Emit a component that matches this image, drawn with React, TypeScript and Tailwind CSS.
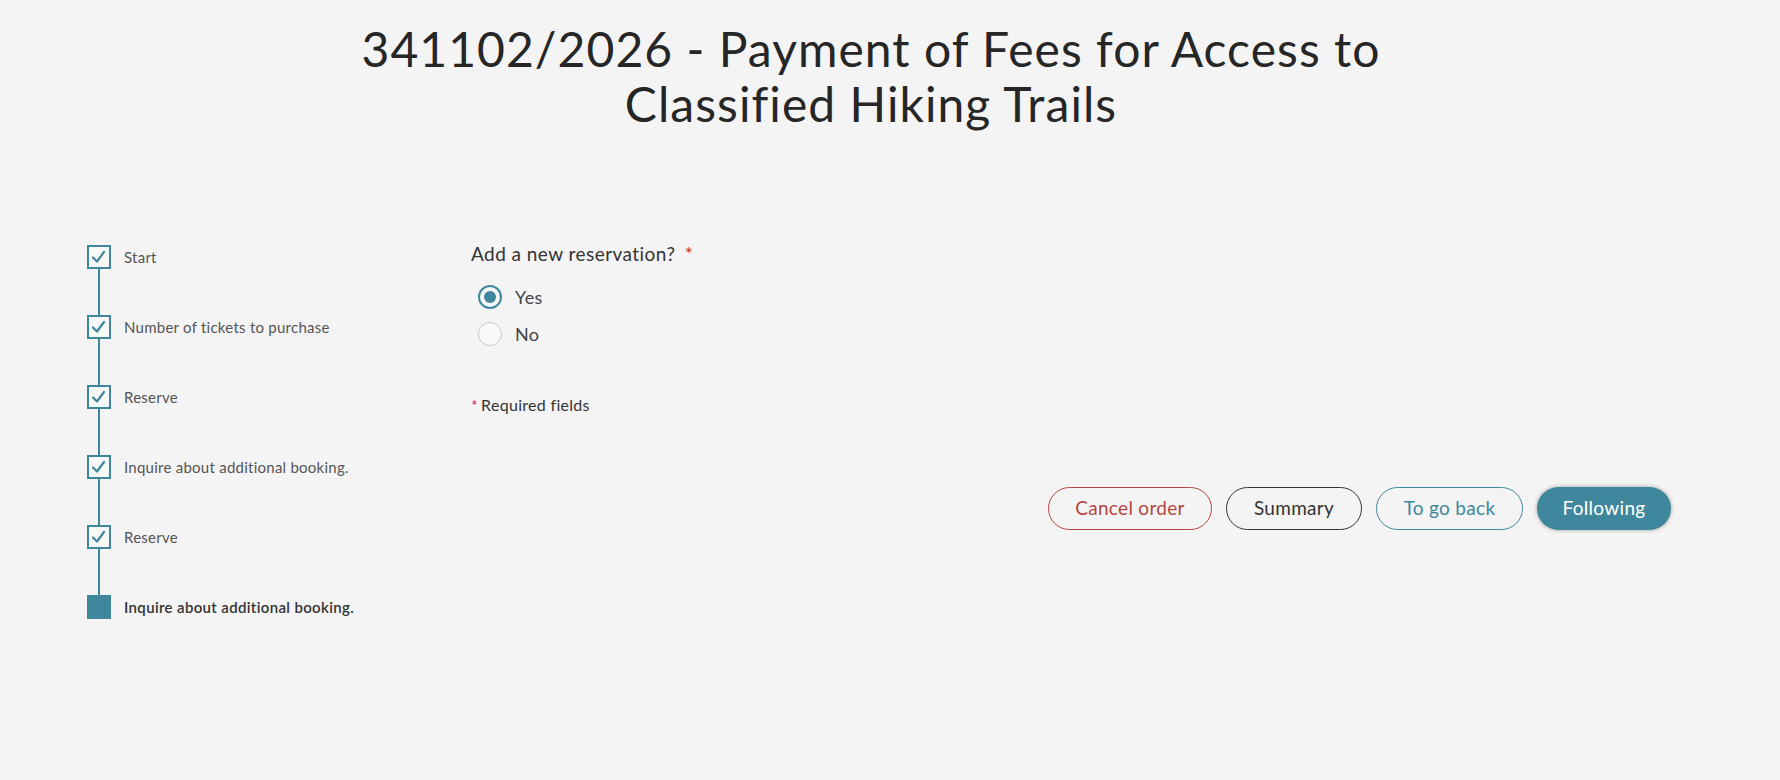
import { useState } from 'react'

const steps = [
  { label: 'Start', done: true },
  { label: 'Number of tickets to purchase', done: true },
  { label: 'Reserve', done: true },
  { label: 'Inquire about additional booking.', done: true },
  { label: 'Reserve', done: true },
  { label: 'Inquire about additional booking.', done: false },
]

function CheckBox({ done }: { done: boolean }) {
  if (!done) {
    return <div className="h-[24px] w-[24px] shrink-0 bg-[#3f879c]" />
  }
  return (
    <div className="flex h-[24px] w-[24px] shrink-0 items-center justify-center border-2 border-[#3f879c] bg-[#f7f8f8]">
      <svg width="20" height="20" viewBox="0 0 20 20" fill="none">
        <polyline
          points="4,10.5 8,14.5 15,5"
          stroke="#3f879c"
          strokeWidth="2.2"
          strokeLinecap="round"
          strokeLinejoin="round"
        />
      </svg>
    </div>
  )
}

function Radio({ checked, label, onClick }: { checked: boolean; label: string; onClick: () => void }) {
  return (
    <button type="button" onClick={onClick} className="flex h-[37px] items-center gap-[13px] pl-[7px]">
      {checked ? (
        <span className="flex h-[24px] w-[24px] items-center justify-center rounded-full border-2 border-[#3f879c] bg-[#f7f8f8]">
          <span className="h-[12px] w-[12px] rounded-full bg-[#3f879c]" />
        </span>
      ) : (
        <span className="h-[24px] w-[24px] rounded-full border border-[#c9c9c9] bg-[#f9f9fb]" />
      )}
      <span className="text-[18px] leading-[24px] tracking-[0.4px] text-[#444]">{label}</span>
    </button>
  )
}

export default function App() {
  const [answer, setAnswer] = useState<'yes' | 'no'>('yes')

  return (
    <div className="min-h-[780px] bg-[#f4f4f4] font-['Lato',sans-serif] text-[#333]">
      {/* Title */}
      <h1 className="pt-[21px] pr-[38px] text-center text-[48px] leading-[55px] font-normal tracking-[1.05px] text-[#262626]">
        341102/2026 - Payment of Fees for Access to
        <br />
        Classified Hiking Trails
      </h1>

      <div className="mt-[109px] flex pl-[87px] pr-[109px]">
        {/* Stepper */}
        <div className="w-[384px] shrink-0 pt-[5px]">
          {steps.map((step, i) => (
            <div key={i}>
              <div className="flex items-center gap-[13px]">
                <CheckBox done={step.done} />
                <span
                  className={
                    step.done
                      ? 'text-[15px] leading-[24px] tracking-[0.25px] text-[#555]'
                      : 'text-[15px] leading-[24px] font-semibold tracking-[0.35px] text-[#333]'
                  }
                >
                  {step.label}
                </span>
              </div>
              {i < steps.length - 1 && <div className="ml-[11px] h-[46px] w-[2px] bg-[#3f879c]" />}
            </div>
          ))}
        </div>

        {/* Form */}
        <div className="flex flex-1 flex-col">
          <div className="text-[19px] leading-[28px] tracking-[0.45px] text-[#333]">
            Add a new reservation? <span className="ml-[4px] text-[#c0392b]">*</span>
          </div>
          <div className="mt-[10px] flex flex-col items-start">
            <Radio checked={answer === 'yes'} label="Yes" onClick={() => setAnswer('yes')} />
            <Radio checked={answer === 'no'} label="No" onClick={() => setAnswer('no')} />
          </div>
          <div className="mt-[41px] text-[16px] leading-[24px] font-normal tracking-[0.3px] text-[#333]">
            <span className="mr-[3px] text-[#c0392b]">*</span>Required fields
          </div>

          <div className="mt-[70px] flex justify-end gap-[14px]">
            <button className="h-[43px] w-[164px] rounded-full border border-[#b4453f] text-[19px] tracking-[0.3px] text-[#b4453f]">
              Cancel order
            </button>
            <button className="h-[43px] w-[136px] rounded-full border border-[#333] text-[19px] tracking-[0.3px] text-[#333]">
              Summary
            </button>
            <button className="h-[43px] w-[147px] rounded-full border border-[#3f879c] text-[19px] tracking-[0.3px] text-[#3f879c]">
              To go back
            </button>
            <button className="h-[43px] w-[134px] rounded-full bg-[#3f879c] text-[19px] tracking-[0.3px] text-white shadow-[0_0_4px_rgba(0,0,0,0.35)]">
              Following
            </button>
          </div>
        </div>
      </div>
    </div>
  )
}
